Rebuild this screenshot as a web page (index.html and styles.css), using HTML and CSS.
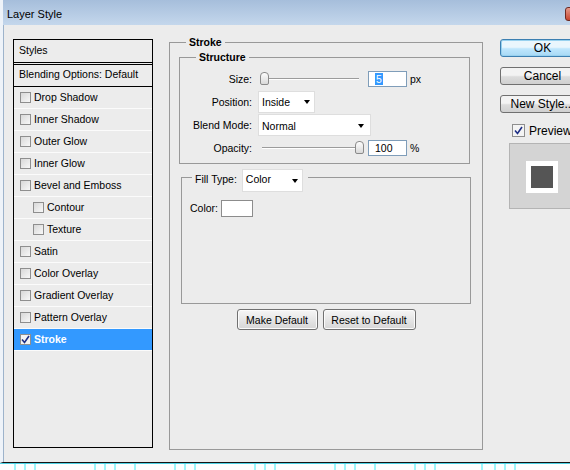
FILE: index.html
```html
<!DOCTYPE html>
<html lang="en">
<head>
    <meta charset="UTF-8">
    <meta name="viewport" content="width=device-width, initial-scale=1.0">
    <title>Layer Style</title>
    <link rel="stylesheet" href="styles.css">
</head>
<body>
    <div class="window">
        <div class="titlebar">
            <span class="title">Layer Style</span>
            <span class="close"></span>
        </div>
        <div class="dialog">
            <div class="styles-list">
                <div class="list-header">Styles</div>
                <div class="list-blend">Blending Options: Default</div>
                <div class="list-item"><span class="check"></span>Drop Shadow</div>
                <div class="list-item"><span class="check"></span>Inner Shadow</div>
                <div class="list-item"><span class="check"></span>Outer Glow</div>
                <div class="list-item"><span class="check"></span>Inner Glow</div>
                <div class="list-item"><span class="check"></span>Bevel and Emboss</div>
                <div class="list-item sub"><span class="check"></span>Contour</div>
                <div class="list-item sub"><span class="check"></span>Texture</div>
                <div class="list-item"><span class="check"></span>Satin</div>
                <div class="list-item"><span class="check"></span>Color Overlay</div>
                <div class="list-item"><span class="check"></span>Gradient Overlay</div>
                <div class="list-item"><span class="check"></span>Pattern Overlay</div>
                <div class="list-item selected">
                    <span class="check checked">
                        <svg width="9" height="9" viewBox="0 0 9 9"><path d="M1 4.5 L3.5 7.5 L8 1" fill="none" stroke="#1d2e86" stroke-width="1.6"/></svg>
                    </span>Stroke
                </div>
            </div>

            <div class="group stroke-group">
                <div class="group-title bold">Stroke</div>

                <div class="group structure">
                    <div class="group-title bold">Structure</div>
                    <div class="row row-size">
                        <label>Size:</label>
                        <div class="slider"><span class="thumb"></span></div>
                        <div class="field"><span class="selection">5</span></div>
                        <span class="unit">px</span>
                    </div>
                    <div class="row row-position">
                        <label>Position:</label>
                        <div class="select select-position"><span>Inside</span><span class="arrow"></span></div>
                    </div>
                    <div class="row row-blend">
                        <label>Blend Mode:</label>
                        <div class="select select-blend"><span>Normal</span><span class="arrow"></span></div>
                    </div>
                    <div class="row row-opacity">
                        <label>Opacity:</label>
                        <div class="slider max"><span class="thumb"></span></div>
                        <div class="field">100</div>
                        <span class="unit">%</span>
                    </div>
                </div>

                <div class="group fill">
                    <div class="group-title fill-title">
                        <span>Fill Type:</span>
                        <div class="select select-fill"><span>Color</span><span class="arrow"></span></div>
                    </div>
                    <div class="color-row">
                        <span>Color:</span>
                        <span class="swatch"></span>
                    </div>
                </div>

                <div class="defaults">
                    <button class="small-btn make">Make Default</button>
                    <button class="small-btn reset">Reset to Default</button>
                </div>
            </div>

            <div class="actions">
                <button class="btn ok">OK</button>
                <button class="btn">Cancel</button>
                <button class="btn">New Style...</button>
                <div class="preview-check">
                    <span class="check big checked">
                        <svg width="9" height="9" viewBox="0 0 9 9"><path d="M1 4.5 L3.5 7.5 L8 1" fill="none" stroke="#1d2e86" stroke-width="1.6"/></svg>
                    </span>
                    <span>Preview</span>
                </div>
                <div class="preview-box">
                    <div class="preview-swatch"><div class="preview-inner"></div></div>
                </div>
            </div>
        </div>
    </div>
    <div class="ruler"></div>
</body>
</html>
```

FILE: styles.css
```css
body {
    margin: 0;
    width: 570px;
    height: 470px;
    overflow: hidden;
    background-color: #fff;
    font-family: "Liberation Sans", Arial, sans-serif;
    font-size: 10.5px;
    color: #000;
}

.window {
    width: 612px;
    height: 463px;
    box-sizing: border-box;
    border-left: 3px solid #eef3f9;
    border-bottom: 1px solid #141414;
    display: flex;
    flex-direction: column;
}

.titlebar {
    height: 25px;
    box-sizing: border-box;
    padding: 2px 4px 0 4px;
    display: flex;
    align-items: center;
    background: linear-gradient(#a6bedb, #c4d7ec);
}

.title {
    font-size: 11px;
}

.close {
    margin-left: auto;
    width: 43px;
    height: 14px;
    box-sizing: border-box;
    border: 1px solid #6e2a22;
    border-radius: 3px;
    background: linear-gradient(#e59a8a, #c8452f);
}

.dialog {
    flex: 1;
    display: flex;
    align-items: flex-start;
    padding: 14px 0 0 9px;
    border-left: 1px solid #9db3cb;
    background-color: #ececec;
}

/* left list of effects */

.styles-list {
    width: 140px;
    height: 409px;
    box-sizing: border-box;
    border: 1px solid #000;
    flex-shrink: 0;
}

.list-header {
    height: 22px;
    line-height: 20px;
    padding-left: 5px;
    border-bottom: 3px double #000;
}

.list-blend {
    height: 21px;
    line-height: 19px;
    padding-left: 5px;
    border-bottom: 1px solid #000;
}

.list-item {
    height: 21px;
    box-sizing: border-box;
    display: flex;
    align-items: center;
    padding: 0 0 1px 6px;
    border-bottom: 1px solid #fbfbfb;
    height: 22px;
}

.list-item.sub {
    padding-left: 19px;
}

.list-item.selected {
    background-color: #3399ff;
    color: #fff;
    font-weight: bold;
}

.check {
    width: 11px;
    height: 11px;
    box-sizing: border-box;
    border: 1px solid #8e8e8e;
    background: linear-gradient(135deg, #d8d8d8, #f8f8f8);
    margin-right: 3px;
    display: flex;
    align-items: center;
    justify-content: center;
}

.check.checked {
    background: #f4f4f4;
}

.check.big {
    width: 13px;
    height: 13px;
    margin-right: 4px;
}

/* group boxes */

.group {
    box-sizing: border-box;
    border: 1px solid #999;
}

.group-title {
    display: block;
    width: max-content;
    height: 13px;
    line-height: 13px;
    margin: -7px 0 -6px 16px;
    padding: 0 3px;
    background-color: #ececec;
}

.bold {
    font-weight: bold;
}

.stroke-group {
    width: 314px;
    height: 408px;
    margin: 3px 0 0 16px;
    flex-shrink: 0;
}

.structure {
    width: 291px;
    height: 107px;
    margin: 14px 0 0 9px;
}

.row {
    display: flex;
    align-items: center;
}

.row label {
    width: 72px;
    text-align: right;
    margin-right: 6px;
}

.row-size { height: 23px; margin-top: 9px; }
.row-position { height: 23px; }
.row-blend { height: 24px; }
.row-opacity { height: 21px; }

.slider {
    width: 104px;
    height: 13px;
    margin-left: 2px;
    display: flex;
    background:
        linear-gradient(#9c9c9c, #9c9c9c) 2px 6px / 97px 1px no-repeat,
        linear-gradient(#fff, #fff) 2px 7px / 97px 1px no-repeat;
}

.slider.max {
    justify-content: flex-end;
}

.thumb {
    width: 9px;
    height: 13px;
    box-sizing: border-box;
    border: 1px solid #8a8a8a;
    border-radius: 4px 4px 2px 2px;
    background: linear-gradient(#fdfdfd, #d9d9d9);
}

.field {
    width: 39px;
    height: 16px;
    box-sizing: border-box;
    margin-left: 4px;
    padding-left: 6px;
    border: 1px solid #7f9db9;
    background-color: #fff;
    display: flex;
    align-items: center;
}

.selection {
    background-color: #3399ff;
    color: #fff;
    padding: 0 1px;
    line-height: 12px;
}

.unit {
    margin-left: 3px;
}

.select {
    height: 22px;
    box-sizing: border-box;
    border: 1px solid #dedede;
    background-color: #fff;
    display: flex;
    align-items: center;
    justify-content: space-between;
    padding: 1px 4px 0 3px;
}

.select-position { width: 57px; }
.select-blend { width: 113px; padding-right: 6px; }
.select-fill { width: 61px; height: 23px; }

.arrow {
    width: 0;
    height: 0;
    border-top: 4px solid #000;
    border-left: 3.5px solid transparent;
    border-right: 3.5px solid transparent;
}

.fill {
    width: 290px;
    height: 127px;
    margin: 13px 0 0 11px;
}

.fill-title {
    display: flex;
    align-items: center;
    height: 23px;
    margin: -9px 0 -14px 10px;
    padding: 0 5px 0 3px;
}

.fill-title span:first-child {
    margin-right: 5px;
    padding-bottom: 3px;
}

.color-row {
    display: flex;
    align-items: center;
    height: 20px;
    margin-top: 20px;
    padding-left: 8px;
}

.swatch {
    width: 32px;
    height: 17px;
    box-sizing: border-box;
    margin-left: 3px;
    border: 1px solid #8c8c8c;
    background-color: #fff;
}

.defaults {
    display: flex;
    justify-content: center;
    gap: 5px;
    margin-top: 5px;
}

.small-btn {
    height: 21px;
    padding: 0;
    font-family: inherit;
    font-size: 10.5px;
    color: #000;
    border: 1px solid #707070;
    border-radius: 3px;
    background: linear-gradient(#f6f6f6, #d6d6d6);
    box-shadow: inset 0 0 0 1px #fbfbfb;
}

.small-btn.make { width: 81px; }
.small-btn.reset { width: 93px; }

/* right column */

.actions {
    margin-left: 17px;
    display: flex;
    flex-direction: column;
    align-items: flex-start;
}

.btn {
    width: 85px;
    height: 18px;
    padding: 0;
    margin-bottom: 10px;
    font-family: "Liberation Sans", Arial, sans-serif;
    font-size: 12px;
    line-height: 14px;
    color: #000;
    border: 1px solid #707070;
    border-radius: 3px;
    background: linear-gradient(#f3f3f3 45%, #dcdcdc 55%, #d0d0d0);
}

.btn.ok {
    border-color: #3c7fb1;
    background: linear-gradient(#eaf6fd 45%, #bee6fd 55%, #a7d9f5);
    box-shadow: inset 0 0 0 1px #98d1ef;
}

.preview-check {
    display: flex;
    align-items: center;
    height: 13px;
    margin: 1px 0 0 12px;
    font-size: 12px;
}

.preview-box {
    width: 80px;
    height: 66px;
    box-sizing: border-box;
    margin: 6px 0 0 9px;
    padding: 17px 0 0 16px;
    border: 1px solid #b4b4b4;
    background-color: #d4d4d4;
}

.preview-swatch {
    width: 32px;
    height: 32px;
    box-sizing: border-box;
    padding: 5px;
    background-color: #fff;
}

.preview-inner {
    width: 22px;
    height: 22px;
    background-color: #555;
}

/* cyan strip under the dialog */

.ruler {
    height: 6px;
    border-top: 1px solid #4fd2e4;
    background:
        linear-gradient(90deg, #9ef6fb 0 2px, transparent 2px 10px, #9ef6fb 10px 12px, transparent 12px 20px, #9ef6fb 20px 22px, transparent 22px) 14px 0 / 80px 6px repeat-x,
        linear-gradient(#9ef6fb, #9ef6fb) 134px 0 / 2px 6px no-repeat,
        linear-gradient(#9ef6fb, #9ef6fb) 374px 0 / 2px 6px no-repeat,
        linear-gradient(#9ef6fb, #9ef6fb) 481px 0 / 2px 6px no-repeat;
}
```
